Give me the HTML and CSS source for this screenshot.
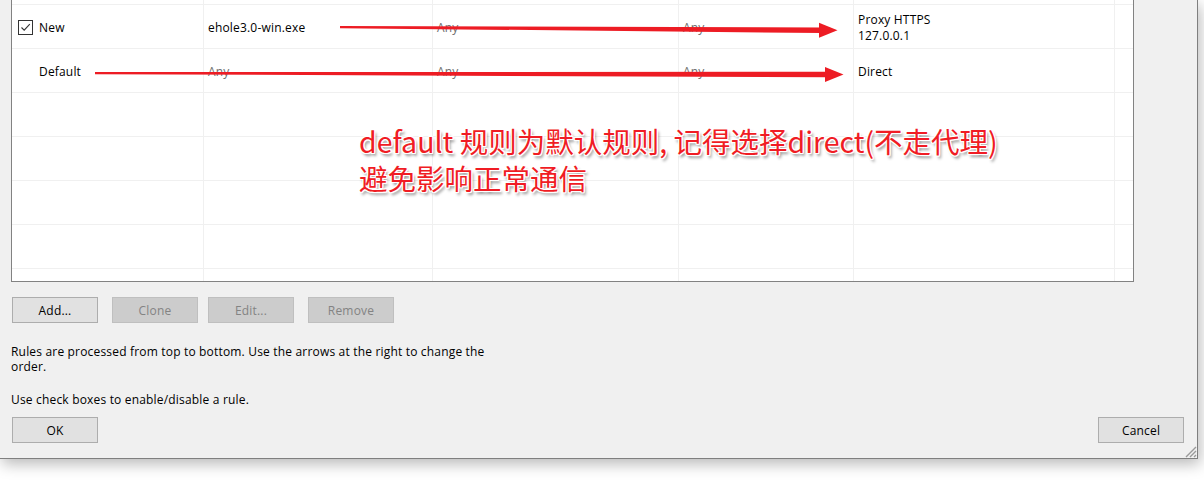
FILE: index.html
```html
<!DOCTYPE html>
<html>
<head>
<meta charset="utf-8">
<link rel="stylesheet" href="styles.css">
</head>
<body>
<div class="window">
  <div class="list">
    <div class="row row-cut"><div class="c c1"></div><div class="c c2"></div><div class="c c3"></div><div class="c c4"></div><div class="c c5"></div><div class="c c6"></div></div>
    <div class="row">
      <div class="c c1"><span class="check"><svg width="13" height="13" viewBox="0 0 13 13"><path d="M2.5 6.5 L5.2 9.2 L10.8 3.2" fill="none" stroke="#333" stroke-width="1.1"/></svg></span><span>New</span></div>
      <div class="c c2">ehole3.0-win.exe</div>
      <div class="c c3 dim">Any</div>
      <div class="c c4 dim">Any</div>
      <div class="c c5"><div>Proxy HTTPS<br>127.0.0.1</div></div>
      <div class="c c6"></div>
    </div>
    <div class="row">
      <div class="c c1 noc"><span>Default</span></div>
      <div class="c c2 dim">Any</div>
      <div class="c c3 dim">Any</div>
      <div class="c c4 dim">Any</div>
      <div class="c c5">Direct</div>
      <div class="c c6"></div>
    </div>
    <div class="row"><div class="c c1"></div><div class="c c2"></div><div class="c c3"></div><div class="c c4"></div><div class="c c5"></div><div class="c c6"></div></div>
    <div class="row"><div class="c c1"></div><div class="c c2"></div><div class="c c3"></div><div class="c c4"></div><div class="c c5"></div><div class="c c6"></div></div>
    <div class="row"><div class="c c1"></div><div class="c c2"></div><div class="c c3"></div><div class="c c4"></div><div class="c c5"></div><div class="c c6"></div></div>
    <div class="row"><div class="c c1"></div><div class="c c2"></div><div class="c c3"></div><div class="c c4"></div><div class="c c5"></div><div class="c c6"></div></div>
    <div class="row row-end"><div class="c c1"></div><div class="c c2"></div><div class="c c3"></div><div class="c c4"></div><div class="c c5"></div><div class="c c6"></div></div>
  </div>

  <div class="btnrow">
    <button class="btn b-add">Add...</button>
    <button class="btn off b-clone">Clone</button>
    <button class="btn off b-edit">Edit...</button>
    <button class="btn off b-remove">Remove</button>
  </div>

  <p class="note n1">Rules are processed from top to bottom. Use the arrows at the right to change the<br>order.</p>
  <p class="note n2">Use check boxes to enable/disable a rule.</p>

  <div class="footer">
    <button class="btn">OK</button>
    <button class="btn">Cancel</button>
  </div>

  <svg class="grip" width="14" height="12" viewBox="0 0 14 12">
    <path d="M13 1 L3 11 M13 5 L7 11 M13 9 L11 11" stroke="#9a9a9a" stroke-width="1.4" fill="none"/>
  </svg>
</div>

<svg class="arrows" width="1204" height="481" viewBox="0 0 1204 481">
  <polygon points="340,26 822,27.5 822,33 340,28.2" fill="#ed1c24"/>
  <polygon points="819,22.7 837.5,30.2 819,37.7" fill="#ed1c24"/>
  <polygon points="95,72 828,71.8 828,77.2 95,74.2" fill="#ed1c24"/>
  <polygon points="825,67 843.5,74.5 825,82" fill="#ed1c24"/>
</svg>

<div class="note-red">default 规则为默认规则, 记得选择direct(不走代理)<br>避免影响正常通信</div>
</body>
</html>
```

FILE: styles.css
```css
html, body {
  margin: 0;
  padding: 0;
  background: #ffffff;
  width: 1204px;
  height: 481px;
  overflow: hidden;
}
body {
  position: relative;
  font-family: "Open Sans", "Noto Sans", sans-serif;
  font-size: 12px;
  letter-spacing: 0.18px;
  color: #000;
}
.window {
  position: relative;
  width: 1197px;
  height: 458px;
  background: #f0f0f0;
  border-right: 1px solid #7f7f7f;
  border-bottom: 1px solid #7f7f7f;
  box-shadow: 2px 5px 14px rgba(0,0,0,0.28);
  display: flex;
  flex-direction: column;
}
.list {
  margin-left: 11px;
  width: 1121px;
  background: #fff;
  border-left: 1px solid #828282;
  border-right: 1px solid #828282;
  border-bottom: 1px solid #828282;
  display: flex;
  flex-direction: column;
}
.row {
  display: grid;
  grid-template-columns: 192px 229px 246px 175px 261px 18px;
  height: 43px;
  border-bottom: 1px solid #f0f0f0;
}
.row-cut { height: 4px; }
.row-end { height: 12px; border-bottom: none; }
.c {
  border-right: 1px solid #f0f0f0;
  display: flex;
  align-items: center;
  padding-left: 4px;
  padding-top: 2px;
  box-sizing: border-box;
  line-height: 16px;
  white-space: nowrap;
  overflow: hidden;
}
.row-cut .c, .row-end .c { padding-top: 0; }
.c6 { border-right: none; }
.c1 { padding-left: 6px; }
.noc { padding-left: 27px; }
.dim { color: #6d6d6d; }
.check {
  width: 13px;
  height: 13px;
  border: 1px solid #333;
  background: #fff;
  margin-right: 6px;
  margin-top: -1px;
  display: flex;
}
.btnrow {
  display: flex;
  margin-top: 15px;
  margin-left: 12px;
}
.btn {
  font-family: "Open Sans", "Noto Sans", sans-serif;
  font-size: 12px;
  letter-spacing: 0.18px;
  width: 86px;
  height: 26px;
  padding: 0;
  margin: 0;
  background: #e1e1e1;
  border: 1px solid #adadad;
  color: #000;
}
.btn.off {
  background: #cccccc;
  border-color: #bfbfbf;
  color: #838383;
}
.b-clone { margin-left: 14px; }
.b-edit { margin-left: 10px; }
.b-remove { margin-left: 14px; }
.note {
  margin: 0;
  margin-left: 11px;
  line-height: 15px;
}
.n1 { margin-top: 21px; }
.n2 { margin-top: 18px; }
.footer {
  display: flex;
  justify-content: space-between;
  margin-top: 10px;
  margin-left: 12px;
  margin-right: 13px;
}
.grip {
  position: absolute;
  right: 0;
  bottom: 0;
}
.arrows {
  position: absolute;
  left: 0;
  top: 0;
}
.note-red {
  position: absolute;
  left: 359px;
  top: 122px;
  font-family: "Noto Sans CJK SC", sans-serif;
  font-size: 28.5px;
  letter-spacing: 0;
  line-height: 37px;
  color: #f01c24;
  white-space: nowrap;
  text-shadow:
    1px 0 0 #fff, -1px 0 0 #fff, 0 1px 0 #fff, 0 -1px 0 #fff,
    1px 1px 0 #fff, -1px -1px 0 #fff, 1px -1px 0 #fff, -1px 1px 0 #fff,
    2px 3px 3px rgba(0,0,0,0.45);
}
```
